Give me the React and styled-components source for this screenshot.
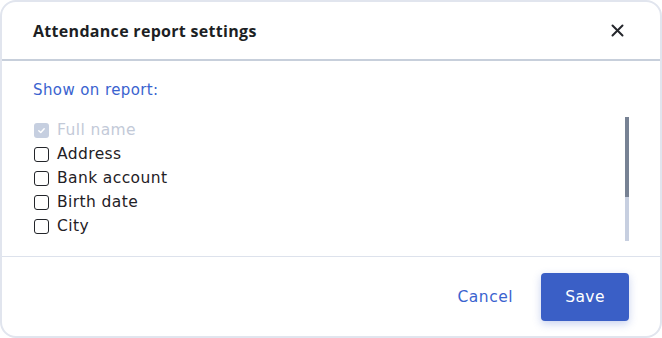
import React from "react";
import styled, { createGlobalStyle } from "styled-components";

const Global = createGlobalStyle`
  html, body { margin: 0; padding: 0; background: #ffffff; }
  body { font-family: "DejaVu Sans", "Noto Sans", sans-serif; }
  * { box-sizing: border-box; }
`;

const Dialog = styled.div`
  width: 662px;
  height: 338px;
  border: 2px solid #e1e5ee;
  border-radius: 16px;
  background: #fff;
  display: flex;
  flex-direction: column;
  overflow: hidden;
`;

const Header = styled.div`
  height: 59px;
  flex: none;
  display: flex;
  align-items: center;
  justify-content: space-between;
  padding: 0 36px 0 31px;
  border-bottom: 2px solid #c7cfdb;
`;

const Title = styled.h1`
  margin: 0;
  font-family: "Open Sans", sans-serif;
  font-size: 16px;
  font-weight: 700;
  color: #1d1f24;
  letter-spacing: 0.3px;
`;

const CloseButton = styled.button`
  border: 0;
  background: none;
  padding: 0;
  width: 14px;
  height: 14px;
  display: flex;
  align-items: center;
  justify-content: center;
  cursor: pointer;
`;

const Body = styled.div`
  flex: 1;
  display: flex;
  flex-direction: column;
  padding: 19px 31px 0 31px;
  border-bottom: 1px solid #dde2ec;
`;

const Label = styled.div`
  font-size: 15px;
  letter-spacing: 0.4px;
  color: #3a63cf;
  line-height: 20px;
  margin-bottom: 18px;
`;

const ListArea = styled.div`
  display: flex;
  justify-content: space-between;
`;

const List = styled.div`
  display: flex;
  flex-direction: column;
`;

const Row = styled.label`
  display: flex;
  align-items: center;
  gap: 8px;
  height: 24px;
  font-size: 15.5px;
  letter-spacing: 0.4px;
  color: ${(p) => (p.$disabled ? "#c3cad8" : "#1f2126")};
`;

const Box = styled.span`
  width: 15px;
  height: 15px;
  border-radius: 3px;
  display: flex;
  align-items: center;
  justify-content: center;
  margin-left: 1px;
  background: ${(p) => (p.$checked ? "#c6cfe0" : "#fff")};
  border: ${(p) => (p.$checked ? "none" : "1.5px solid #23252a")};
`;

const Scrollbar = styled.div`
  width: 4px;
  height: 124px;
  background: #c7cfe0;
  display: flex;
  flex-direction: column;
  margin-top: -1px;
`;

const Thumb = styled.div`
  height: 80px;
  background: #778294;
`;

const Footer = styled.div`
  height: 79px;
  flex: none;
  display: flex;
  align-items: center;
  justify-content: flex-end;
  gap: 28px;
  padding: 0 31px 0 0;
`;

const TextButton = styled.button`
  border: 0;
  background: none;
  font-family: inherit;
  font-size: 15.5px;
  font-weight: 400;
  letter-spacing: 0.5px;
  color: #3a63cf;
  padding: 0;
  cursor: pointer;
`;

const PrimaryButton = styled.button`
  border: 0;
  width: 88px;
  height: 48px;
  border-radius: 4px;
  background: #3a5fc6;
  color: #fff;
  font-family: inherit;
  font-size: 15.5px;
  font-weight: 400;
  letter-spacing: 0.4px;
  box-shadow: 0 3px 8px rgba(58, 95, 198, 0.28);
  cursor: pointer;
`;

const items = [
  { name: "Full name", checked: true, disabled: true },
  { name: "Address" },
  { name: "Bank account" },
  { name: "Birth date" },
  { name: "City" },
];

export default function App() {
  return (
    <>
      <Global />
      <Dialog>
        <Header>
          <Title>Attendance report settings</Title>
          <CloseButton aria-label="Close">
            <svg width="13" height="13" viewBox="0 0 13 13">
              <path d="M1.5 1.5 L11.5 11.5 M11.5 1.5 L1.5 11.5" stroke="#25272c" strokeWidth="2" strokeLinecap="round" />
            </svg>
          </CloseButton>
        </Header>
        <Body>
          <Label>Show on report:</Label>
          <ListArea>
            <List>
              {items.map((it) => (
                <Row key={it.name} $disabled={it.disabled}>
                  <Box $checked={it.checked}>
                    {it.checked && (
                      <svg width="9" height="9" viewBox="0 0 10 10">
                        <path d="M2 5.2 L4.2 7.3 L8 3" stroke="#fff" strokeWidth="1.6" fill="none" strokeLinecap="round" strokeLinejoin="round" />
                      </svg>
                    )}
                  </Box>
                  {it.name}
                </Row>
              ))}
            </List>
            <Scrollbar>
              <Thumb />
            </Scrollbar>
          </ListArea>
        </Body>
        <Footer>
          <TextButton>Cancel</TextButton>
          <PrimaryButton>Save</PrimaryButton>
        </Footer>
      </Dialog>
    </>
  );
}
